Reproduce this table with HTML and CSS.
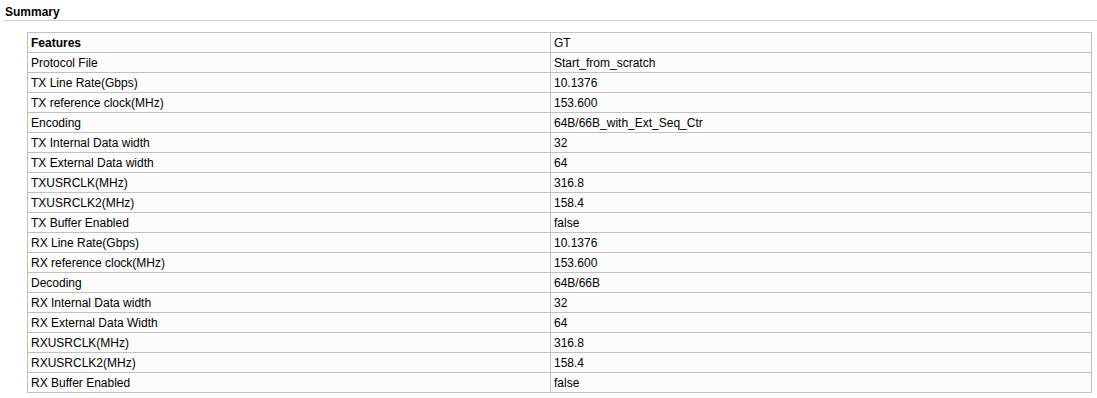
FILE: index.html
```html
<!DOCTYPE html>
<html>
<head>
<meta charset="utf-8">
<link rel="stylesheet" href="styles.css">
</head>
<body>
<div class="title">Summary</div>
<table class="summary">
<tr class="head"><td>Features</td><td>GT</td></tr>
<tr><td>Protocol File</td><td>Start_from_scratch</td></tr>
<tr><td>TX Line Rate(Gbps)</td><td>10.1376</td></tr>
<tr><td>TX reference clock(MHz)</td><td>153.600</td></tr>
<tr><td>Encoding</td><td>64B/66B_with_Ext_Seq_Ctr</td></tr>
<tr><td>TX Internal Data width</td><td>32</td></tr>
<tr><td>TX External Data width</td><td>64</td></tr>
<tr><td>TXUSRCLK(MHz)</td><td>316.8</td></tr>
<tr><td>TXUSRCLK2(MHz)</td><td>158.4</td></tr>
<tr><td>TX Buffer Enabled</td><td>false</td></tr>
<tr><td>RX Line Rate(Gbps)</td><td>10.1376</td></tr>
<tr><td>RX reference clock(MHz)</td><td>153.600</td></tr>
<tr><td>Decoding</td><td>64B/66B</td></tr>
<tr><td>RX Internal Data width</td><td>32</td></tr>
<tr><td>RX External Data Width</td><td>64</td></tr>
<tr><td>RXUSRCLK(MHz)</td><td>316.8</td></tr>
<tr><td>RXUSRCLK2(MHz)</td><td>158.4</td></tr>
<tr><td>RX Buffer Enabled</td><td>false</td></tr>
</table>
</body>
</html>
```
FILE: styles.css
```css
body {
  margin: 0;
  background: #ffffff;
  font-family: "Liberation Sans", Arial, sans-serif;
  font-size: 12px;
  color: #000;
}
.title {
  margin-left: 4px;
  padding-left: 1px;
  height: 20px;
  line-height: 24px;
  font-weight: bold;
  border-bottom: 1px solid #d0d0d0;
}
.summary {
  margin: 11px 0 0 27px;
  width: 1065px;
  border-collapse: collapse;
  background: #fcfcfc;
  table-layout: fixed;
}
.summary td {
  border: 1px solid #c0c0c0;
  height: 19px;
  padding: 1px 3px 0 3px;
  line-height: 18px;
  box-sizing: border-box;
}
.summary td:first-child {
  width: 523px;
}
.summary tr.head td:first-child {
  font-weight: bold;
}
```
